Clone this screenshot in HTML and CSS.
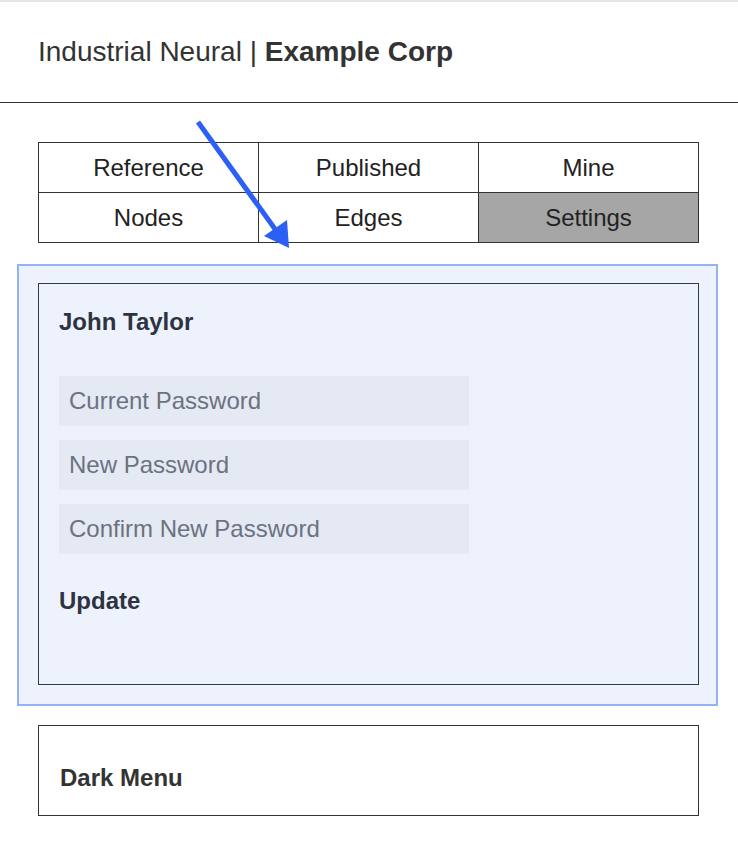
FILE: index.html
```html
<html>
<head>
<title>Settings</title>
<link rel="stylesheet" href="styles.css">
</head>
<body>
<div class="topbar"></div>
<div class="header">
  <span class="brand">Industrial Neural | <b>Example Corp</b></span>
</div>

<div class="tabs">
  <div class="tab">Reference</div>
  <div class="tab">Published</div>
  <div class="tab">Mine</div>
  <div class="tab">Nodes</div>
  <div class="tab">Edges</div>
  <div class="tab active">Settings</div>
</div>

<div class="focus">
  <div class="panel">
    <div class="title">John Taylor</div>
    <div class="fields">
      <input class="field" type="password" placeholder="Current Password">
      <input class="field" type="password" placeholder="New Password">
      <input class="field" type="password" placeholder="Confirm New Password">
    </div>
    <div class="title update">Update</div>
  </div>
</div>

<div class="menu">
  <div class="menu-title">Dark Menu</div>
</div>

<svg class="arrow" width="738" height="260" viewBox="0 0 738 260">
  <line x1="198" y1="122" x2="275" y2="229" stroke="#2b5ff6" stroke-width="5"/>
  <polygon points="289,248 264,236 287,220" fill="#2b5ff6"/>
</svg>
</body>
</html>
```

FILE: styles.css
```css
body { margin:0; font-family:"Liberation Sans", Arial, Helvetica, sans-serif; color:#333; background:#fff; }

.topbar { height:2px; background:#e5e5ea; }

.header { height:100px; display:flex; align-items:center; padding-left:38px; border-bottom:1px solid #333; }
.brand { font-size:28px; color:#333; }
.brand b { font-weight:bold; }

.tabs { display:grid; grid-template-columns:repeat(3, 220px); margin:39px 0 0 38px; width:660px; border-left:1px solid #333; border-top:1px solid #333; }
.tab { height:49px; border-right:1px solid #333; border-bottom:1px solid #333; display:flex; align-items:center; justify-content:center; font-size:24px; color:#222; }
.tab.active { background:#a6a6a6; }

.focus { margin:21px 0 0 17px; width:661px; padding:17px 17px 19px 19px; border:2px solid #94b3f7; background:#eef2fd; }

.panel { border:1px solid #333a47; padding:24px 20px 69px 20px; }
.title { font-size:24px; line-height:28px; font-weight:bold; color:#2d3342; }
.fields { display:flex; flex-direction:column; gap:14px; margin-top:40px; }
.field { width:410px; height:50px; box-sizing:border-box; border:none; outline:none; background:#e5e9f4; padding:0 10px; font-family:"Liberation Sans", Arial, sans-serif; font-size:24px; color:#333; }
.field::placeholder { color:#6b7280; }
.update { margin-top:33px; }

.menu { margin:19px 0 0 38px; width:661px; border:1px solid #333; padding:38px 0 23px 21px; box-sizing:border-box; height:91px; }
.menu-title { font-size:24px; line-height:28px; font-weight:bold; color:#333; }

.arrow { position:absolute; left:0; top:0; pointer-events:none; }
```
